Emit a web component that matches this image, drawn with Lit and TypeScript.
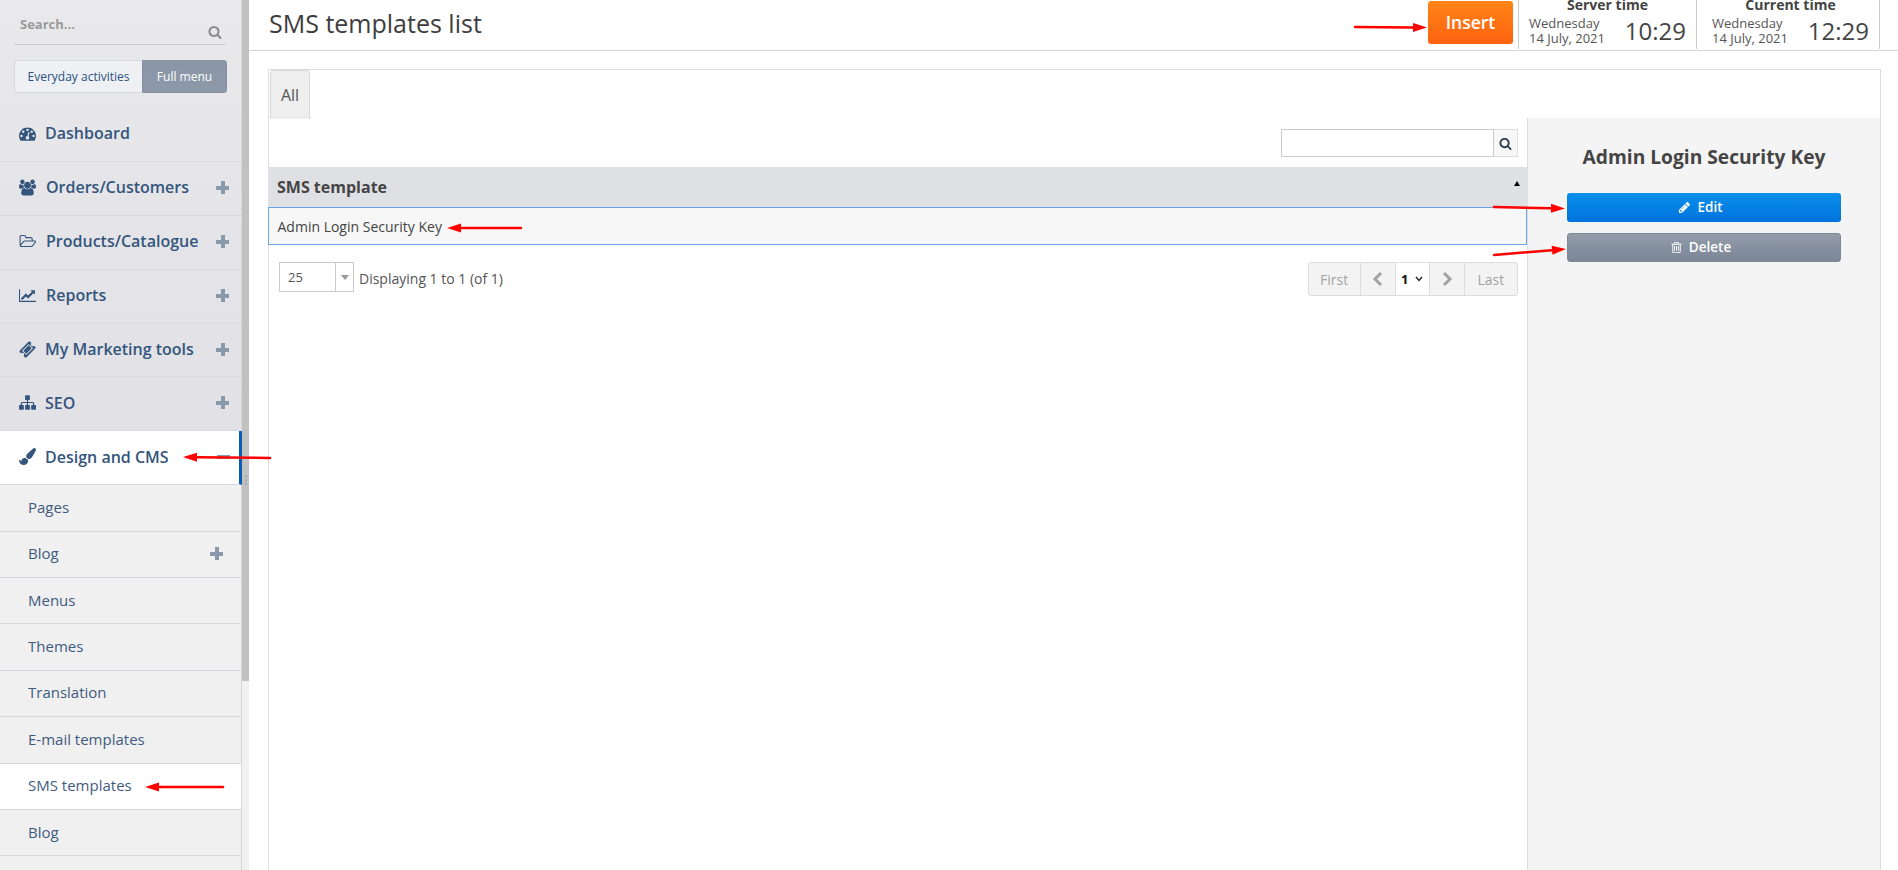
import { LitElement, html, css, svg } from "lit";
import { customElement } from "lit/decorators.js";

const P = {
  search: "M1216 832q0-185-131.500-316.500t-316.500-131.500-316.500 131.500-131.500 316.500 131.500 316.500 316.500 131.500 316.500-131.500 131.500-316.500zm512 832q0 52-38 90t-90 38q-54 0-90-38l-343-342q-179 124-399 124-143 0-273.500-55.500t-225-150-150-225-55.500-273.500 55.500-273.500 150-225 225-150 273.500-55.500 273.500 55.500 225 150 150 225 55.500 273.500q0 220-124 399l343 343q37 37 37 90z",
  users: "M593 896q-162 5-265 128h-134q-82 0-138-40.500t-56-118.500q0-353 124-353 6 0 43.500 21t97.500 42.500 119 21.500q67 0 133-23-5 37-5 66 0 139 81 256zm1071 637q0 120-73 189.500t-194 69.500h-874q-121 0-194-69.500t-73-189.500q0-53 3.500-103.500t14-109 26.500-108.500 43-97.500 62-81 85.500-53.500 111.500-20q10 0 43 21.500t73 48 107 48 135 21.500 135-21.500 107-48 73-48 43-21.500q61 0 111.500 20t85.500 53.500 62 81 43 97.500 26.500 108.500 14 109 3.500 103.500zm-1024-1277q0 106-75 181t-181 75-181-75-75-181 75-181 181-75 181 75 75 181zm704 384q0 159-112.500 271.500t-271.500 112.500-271.500-112.500-112.500-271.500 112.500-271.500 271.500-112.500 271.500 112.500 112.500 271.500zm576 225q0 78-56 118.500t-138 40.500h-134q-103-123-265-128 81-117 81-256 0-29-5-66 66 23 133 23 59 0 119-21.500t97.500-42.500 43.500-21q124 0 124 353zm-128-609q0 106-75 181t-181 75-181-75-75-181 75-181 181-75 181 75 75 181z",
  pencil: "M491 1536l91-91-235-235-91 91v107h128v128h107zm523-928q0-22-22-22-10 0-17 7l-542 542q-7 7-7 17 0 22 22 22 10 0 17-7l542-542q7-7 7-17zm-54-192l416 416-832 832h-416v-416zm683 96q0 53-37 90l-166 166-416-416 166-165q36-38 90-38 53 0 91 38l235 234q37 39 37 91z",
  trash: "M704 736v576q0 14-9 23t-23 9h-64q-14 0-23-9t-9-23v-576q0-14 9-23t23-9h64q14 0 23 9t9 23zm256 0v576q0 14-9 23t-23 9h-64q-14 0-23-9t-9-23v-576q0-14 9-23t23-9h64q14 0 23 9t9 23zm256 0v576q0 14-9 23t-23 9h-64q-14 0-23-9t-9-23v-576q0-14 9-23t23-9h64q14 0 23 9t9 23zm128 724v-948h-896v948q0 22 7 40.500t14.500 27 10.500 8.500h832q3 0 10.500-8.500t14.500-27 7-40.500zm-672-1076h448l-48-117q-7-9-17-11h-317q-10 2-17 11zm928 32v64q0 14-9 23t-23 9h-96v948q0 83-47 143.500t-113 60.500h-832q-66 0-113-58.500t-47-141.500v-952h-96q-14 0-23-9t-9-23v-64q0-14 9-23t23-9h309l70-167q15-37 54-63t79-26h320q40 0 79 26t54 63l70 167h309q14 0 23 9t9 23z",
  sitemap: "M1792 1248v320q0 40-28 68t-68 28h-320q-40 0-68-28t-28-68v-320q0-40 28-68t68-28h96v-192h-512v192h96q40 0 68 28t28 68v320q0 40-28 68t-68 28h-320q-40 0-68-28t-28-68v-320q0-40 28-68t68-28h96v-192h-512v192h96q40 0 68 28t28 68v320q0 40-28 68t-68 28h-320q-40 0-68-28t-28-68v-320q0-40 28-68t68-28h96v-192q0-52 38-90t90-38h512v-192h-96q-40 0-68-28t-28-68v-320q0-40 28-68t68-28h320q40 0 68 28t28 68v320q0 40-28 68t-68 28h-96v192h512q52 0 90 38t38 90v192h96q40 0 68 28t28 68z",
  chart: "M2048 1536v128h-2048v-1536h128v1408h1920zm-128-1248v435q0 21-19.500 29.500t-35.500-7.500l-121-121-633 633q-10 10-23 10t-23-10l-233-233-416 416-192-192 585-585q10-10 23-10t23 10l233 233 464-464-121-121q-16-16-7.500-35.500t29.500-19.500h435q14 0 23 9t9 23z",
  folder: "M1845 931q0-35-53-35h-1088q-40 0-85.500 21.500t-71.500 52.500l-294 363q-18 24-18 40 0 35 53 35h1088q40 0 86-22t71-53l294-363q18-22 18-39zm-1141-163h768v-160q0-40-28-68t-68-28h-576q-40 0-68-28t-28-68v-64q0-40-28-68t-68-28h-320q-40 0-68 28t-28 68v853l256-315q44-53 116-87.500t140-34.500zm1269 163q0 62-46 120l-295 363q-43 53-116 87.500t-140 34.500h-1088q-92 0-158-66t-66-158v-960q0-92 66-158t158-66h320q92 0 158 66t66 158v32h544q92 0 158 66t66 158v160h192q54 0 99 24.500t67 70.500q15 32 15 68z",
  brush: "M1615 0q70 0 122.500 46.500t52.500 116.500q0 63-45 151-332 629-465 752-97 91-218 91-126 0-216.500-92.500t-90.500-219.500q0-128 92-212l638-579q59-54 130-54zm-909 1034q39 76 106.500 130t150.500 76l1 71q4 213-129.500 347t-348.500 134q-123 0-218-46.500t-152.500-127.500-86.500-183-29-220q7 5 41 30t62 44.500 59 36.500 46 17q41 0 55-37 25-66 57.500-112.500t69.500-76 88-47.500 103-25.500 125-10.500z",
  gauge: "M384 1152q0-53-37.500-90.500t-90.500-37.500-90.500 37.500-37.500 90.500 37.500 90.500 90.500 37.500 90.500-37.500 37.500-90.500zm192-448q0-53-37.500-90.500t-90.500-37.500-90.500 37.500-37.500 90.500 37.500 90.500 90.500 37.500 90.500-37.500 37.500-90.500zm428 481l101-382q6-26-7.500-48.500t-38.500-29.500-48 6.500-30 39.500l-101 382q-60 5-107 43.500t-63 98.500q-20 77 20 146t117 89 146-20 89-117q16-60-6-117t-72-91zm660-33q0-53-37.500-90.500t-90.500-37.500-90.500 37.500-37.500 90.500 37.500 90.500 90.500 37.500 90.500-37.500 37.500-90.500zm-640-640q0-53-37.500-90.500t-90.500-37.500-90.500 37.500-37.500 90.500 37.500 90.500 90.500 37.500 90.500-37.500 37.500-90.500zm448 192q0-53-37.500-90.500t-90.500-37.500-90.500 37.500-37.500 90.500 37.500 90.500 90.500 37.500 90.500-37.500 37.500-90.500zm320 448q0 261-141 483-19 29-54 29h-1402q-35 0-54-29-141-221-141-483 0-182 71-348t191-286 286-191 348-71 348 71 286 191 191 286 71 348z",
  ticket: "M1024 452l316 316-572 572-316-316zm-211 979l618-618q19-19 19-45t-19-45l-362-362q-18-18-45-18t-45 18l-618 618q-19 19-19 45t19 45l362 362q18 18 45 18t45-18zm889-637l-907 908q-37 37-90.500 37t-90.500-37l-126-126q56-56 56-136t-56-136-136-56-136 56l-125-126q-37-37-37-90.500t37-90.500l907-906q37-37 90.500-37t90.500 37l125 125q-56 56-56 136t56 136 136 56 136-56l126 125q37 37 37 90.500t-37 90.500z",
};

const icon = (d: string, w = 1792, h = 1792) => html`<svg class="ic" viewBox="0 0 ${w} ${h}" fill="currentColor"><path d=${d}></path></svg>`;

const mains = [
  { t: "Dashboard", i: icon(P.gauge), wide: false, m: "" },
  { t: "Orders/Customers", i: icon(P.users, 1920), wide: true, m: "+" },
  { t: "Products/Catalogue", i: icon(P.folder, 1976), wide: true, m: "+" },
  { t: "Reports", i: icon(P.chart, 2048), wide: true, m: "+" },
  { t: "My Marketing tools", i: icon(P.ticket), wide: false, m: "+" },
  { t: "SEO", i: icon(P.sitemap), wide: false, m: "+" },
  { t: "Design and CMS", i: icon(P.brush), wide: false, m: "-", active: true },
];
const subs = [
  { t: "Pages" },
  { t: "Blog", plus: true },
  { t: "Menus" },
  { t: "Themes" },
  { t: "Translation" },
  { t: "E-mail templates" },
  { t: "SMS templates", active: true },
  { t: "Blog" },
  { t: "" },
];
const arrows: [number, number, number, number][] = [
  [1355, 27, 1427, 27.5],
  [270, 458, 183, 457],
  [223, 787, 145, 787],
  [521, 228, 447, 228],
  [1494, 207, 1565, 208.5],
  [1494, 255, 1566, 249],
];

@customElement("app-root")
export class AppRoot extends LitElement {
  static styles = css`
    :host { display: block; position: relative; width: 1898px; height: 870px; overflow: hidden; background: #fff;
      font-family: "Open Sans", "Liberation Sans", sans-serif; color: #444; }
    * { box-sizing: border-box; }
    .page { display: flex; height: 870px; }
    .side { width: 249px; flex: none; display: flex; height: 870px; overflow: hidden; }
    .nav { width: 242px; flex: none; background: linear-gradient(#e9e9eb, #e1e1e6 430px); border-right: 1px solid #d8d8dc; }
    .scroll { width: 7px; flex: none; background: #f1f1f1; display: flex; flex-direction: column; }
    .thumb { height: 681px; background: #c1c1c1; display: flex; align-items: center; flex-direction: column; gap: 2px; padding-top: 475px; }
    .thumb i { width: 2px; height: 2px; background: #a8a8a8; display: block; }
    .search { margin: 0 15px 0 14px; height: 45px; border-bottom: 1px solid #cbcbcd; display: flex; justify-content: space-between; color: #9a9a9a; }
    .search span { font-size: 13px; font-weight: 700; padding: 15px 0 0 6px; line-height: 18px; }
    .search svg { width: 14px; height: 14px; margin: 25px 4px 0 0; color: #8a8a8a; }
    .toggle { margin: 15px 14px 15px 14px; height: 33px; display: flex; font-size: 12px; }
    .toggle div { display: flex; align-items: center; justify-content: center; padding-bottom: 1px; }
    .t1 { width: 128px; background: #eef0f4; border: 1px solid #d6d8dc; border-right: 0; border-radius: 3px 0 0 3px; color: #2b527f; }
    .t2 { width: 85px; background: linear-gradient(#8a96a5, #8d99a8); border: 1px solid #86919f; border-radius: 0 3px 3px 0; color: #fff; }
    .main { height: 53.9px; display: flex; align-items: center; padding: 0 12px 2px 19px; border-bottom: 1px solid #d8dadf; color: #34557c; font-size: 16px; font-weight: 600; position: relative; }
    .main.active { background: #fff; border-right: 3px solid #0b5cb5; margin-right: -1px; padding-right: 9px; }
    .main .ic { width: 17px; height: 17px; flex: none; }
    .main .label { flex: 1; margin-left: 9px; white-space: nowrap; }
    .main .label.wide { margin-left: 10px; }
    .pm { width: 13px; height: 13px; position: relative; flex: none; }
    .pm::before { content: ""; position: absolute; left: 0; right: 0; top: 5px; height: 4px; background: #8899a9; }
    .pm.plus::after { content: ""; position: absolute; top: 0; bottom: 0; left: 4.5px; width: 4px; background: #8899a9; }
    .sub { height: 46.4px; display: flex; align-items: center; padding: 0 18px 2px 28px; background: #f0f0f0; border-bottom: 1px solid #d5d8de; font-size: 15px; color: #3f5b7f; }
    .sub.active { background: #fff; }
    .sub span { flex: 1; }
    .sub .pm { flex: none; }
    .content { flex: 1; min-width: 0; display: flex; flex-direction: column; }
    .head { height: 51px; flex: none; border-bottom: 1px solid #d2d2d2; display: flex; align-items: stretch; padding-left: 20px; }
    h1 { margin: 0; font-size: 25px; font-weight: 400; color: #3d3d3d; flex: 1; line-height: 47px; }
    .insert { width: 85px; height: 43px; margin: 1px 5px 0 0; padding-bottom: 2px; background: linear-gradient(#ff8517, #ff6210); border-radius: 3px; color: #fff; font-size: 17.5px; font-weight: 600; display: flex; align-items: center; justify-content: center; }
    .clock { height: 49px; border-left: 1px solid #ccc; padding: 0 10px; position: relative; overflow: hidden; }
    .clock.a { width: 178px; }
    .clock.b { width: 184px; border-right: 1px solid #ccc; margin-right: 18px; padding-left: 15px; }
    .clock b { display: block; text-align: center; font-size: 14px; font-weight: 700; line-height: 14px; margin-top: -2px; color: #444; }
    .clock .row { display: flex; justify-content: space-between; align-items: center; margin-top: 2px; }
    .clock .d { font-size: 13px; line-height: 15px; color: #555; white-space: nowrap; }
    .clock .tm { font-size: 24px; line-height: 34px; color: #444; }
    .wrap { flex: 1; min-height: 0; padding: 18px 17px 0 19px; }
    .panel { border: 1px solid #ddd; border-bottom: 0; height: 900px; }
    .tabs { height: 48px; }
    .tab { width: 40px; height: 49px; margin-left: 1px; background: #eee; border: 1px solid #d8d8d8; border-bottom: 0; border-radius: 4px 4px 0 0; font-size: 16px; color: #555; display: flex; align-items: center; justify-content: center; }
    .split { display: flex; height: 800px; }
    .left { flex: 1; min-width: 0; padding-top: 11px; }
    .right { width: 353px; flex: none; background: #f4f4f4; border-left: 1px solid #ddd; padding: 0 39px; }
    .right h2 { margin: 0; text-align: center; font-size: 19.2px; font-weight: 700; color: #444; line-height: 26px; padding-top: 26px; margin-bottom: 23px; white-space: nowrap; }
    .btn { height: 29px; border-radius: 3px; color: #fff; font-size: 13.5px; font-weight: 600; display: flex; align-items: center; justify-content: center; gap: 6px; padding: 0 7px 1px 0; }
    .btn svg { width: 13px; height: 13px; }
    .edit { background: linear-gradient(#0a8fea, #0073dd); margin-bottom: 11px; }
    .del { background: linear-gradient(#929caa, #7b8697); border: 1px solid #7e8998; }
    .find { display: flex; justify-content: flex-end; margin: 0 9px 10px 0; }
    .find .in { width: 213px; height: 28px; border: 1px solid #ccc; background: #fff; }
    .find .go { width: 24px; height: 28px; border: 1px solid #ddd; border-left: 0; background: #f7f7f7; display: flex; align-items: center; justify-content: center; color: #2f3f52; }
    .find svg { width: 13px; height: 13px; }
    .th { height: 40px; background: #dfe0e4; display: flex; align-items: center; justify-content: space-between; padding: 0 7px 0 9px; font-size: 16px; font-weight: 700; color: #444; margin-left: -1px; }
    .th i { width: 0; height: 0; border: 3px solid transparent; border-bottom: 5px solid #000; border-top: 0; margin-bottom: 8px; }
    .tr { height: 38px; background: #f7f7f7; border: 1px solid #6aa6e2; display: flex; align-items: center; padding-left: 8.5px; font-size: 14px; color: #444; margin-left: -1px; }
    .foot { display: flex; align-items: flex-start; justify-content: space-between; padding: 17px 9px 0 9px; }
    .pagesel { display: flex; align-items: center; gap: 5px; font-size: 14px; color: #555; padding-left: 1px; }
    .pagesel .txt { padding-top: 2px; }
    .sel { width: 75px; height: 30px; border: 1px solid #ccc; display: flex; background: #fff; font-size: 13px; color: #555; }
    .sel span { flex: 1; padding-left: 8px; line-height: 28px; }
    .sel i { width: 18px; border-left: 1px solid #ccc; display: flex; align-items: center; justify-content: center; }
    .sel i::after { content: ""; border: 4px solid transparent; border-top: 5px solid #999; border-bottom: 0; }
    .pager { display: flex; height: 34px; border: 1px solid #ddd; border-radius: 3px; font-size: 14px; color: #a3a3a3; background: #f3f3f3; }
    .pager div { display: flex; align-items: center; justify-content: center; border-right: 1px solid #ddd; }
    .pager div:last-child { border-right: 0; }
    .pager .lb { width: 52.25px; }
    .pager .ar { width: 35px; }
    .pager svg { width: 12px; height: 16px; }
    .pager .cur { width: 34px; background: #fff; color: #111; font-weight: 700; gap: 7px; font-size: 13px; }
    .pager .cur svg { width: 8px; height: 6px; }
    .over { position: absolute; left: 0; top: 0; width: 1898px; height: 870px; pointer-events: none; }
  `;

  render() {
    return html`
      <div class="page">
        <aside class="side">
          <nav class="nav">
            <div class="search"><span>Search...</span>${icon(P.search)}</div>
            <div class="toggle"><div class="t1">Everyday activities</div><div class="t2">Full menu</div></div>
            ${mains.map(m => html`
              <div class="main ${m.active ? "active" : ""}">
                ${m.i}
                <span class="label ${m.wide ? "wide" : ""}">${m.t}</span>
                ${m.m ? html`<span class="pm ${m.m === "+" ? "plus" : ""}"></span>` : ""}
              </div>`)}
            ${subs.map(s => html`
              <div class="sub ${s.active ? "active" : ""}"><span>${s.t}</span>${s.plus ? html`<span class="pm plus"></span>` : ""}</div>`)}
          </nav>
          <div class="scroll"><div class="thumb"><i></i><i></i><i></i></div></div>
        </aside>
        <section class="content">
          <header class="head">
            <h1>SMS templates list</h1>
            <div class="insert">Insert</div>
            <div class="clock a"><b>Server time</b><div class="row"><div class="d">Wednesday<br />14 July, 2021</div><div class="tm">10:29</div></div></div>
            <div class="clock b"><b>Current time</b><div class="row"><div class="d">Wednesday<br />14 July, 2021</div><div class="tm">12:29</div></div></div>
          </header>
          <div class="wrap">
            <div class="panel">
              <div class="tabs"><div class="tab">All</div></div>
              <div class="split">
                <div class="left">
                  <div class="find"><div class="in"></div><div class="go">${icon(P.search)}</div></div>
                  <div class="th">SMS template<i></i></div>
                  <div class="tr">Admin Login Security Key</div>
                  <div class="foot">
                    <div class="pagesel"><div class="sel"><span>25</span><i></i></div><span class="txt">Displaying 1 to 1 (of 1)</span></div>
                    <div class="pager">
                      <div class="lb">First</div>
                      <div class="ar"><svg viewBox="0 0 12 16" fill="none" stroke="#a3a3a3" stroke-width="3"><path d="M9 2 L3 8 L9 14"></path></svg></div>
                      <div class="cur">1<svg viewBox="0 0 8 6" fill="none" stroke="#222" stroke-width="1.4"><path d="M1 1 L4 4.500 L7 1"></path></svg></div>
                      <div class="ar"><svg viewBox="0 0 12 16" fill="none" stroke="#a3a3a3" stroke-width="3"><path d="M3 2 L9 8 L3 14"></path></svg></div>
                      <div class="lb">Last</div>
                    </div>
                  </div>
                </div>
                <div class="right">
                  <h2>Admin Login Security Key</h2>
                  <div class="btn edit">${icon(P.pencil)}Edit</div>
                  <div class="btn del">${icon(P.trash)}Delete</div>
                </div>
              </div>
            </div>
          </div>
        </section>
      </div>
      <svg class="over" viewBox="0 0 1898 870">
        ${arrows.map(([x1, y1, x2, y2]) => {
          const a = Math.atan2(y2 - y1, x2 - x1);
          const bx = x2 - Math.cos(a) * 14, by = y2 - Math.sin(a) * 14;
          const nx = -Math.sin(a) * 4.5, ny = Math.cos(a) * 4.5;
          return svg`<line x1=${x1} y1=${y1} x2=${bx} y2=${by} stroke="#f00" stroke-width="2.5" stroke-linecap="round"></line>
            <polygon fill="#f00" points="${x2},${y2} ${bx + nx},${by + ny} ${bx - nx},${by - ny}"></polygon>`;
        })}
      </svg>
    `;
  }
}
